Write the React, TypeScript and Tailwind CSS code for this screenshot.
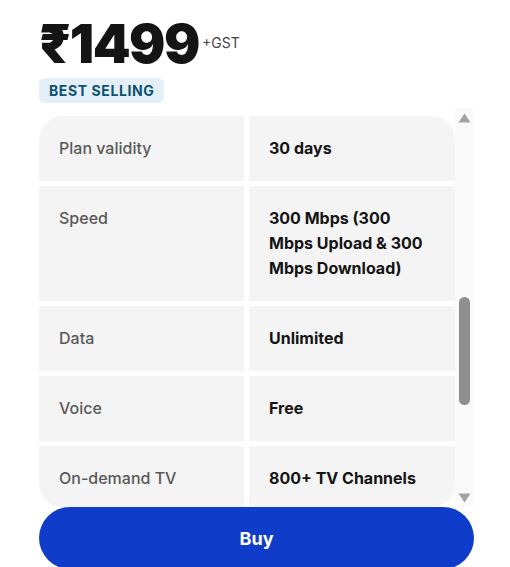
import React from "react";

type Row = { label: string; value: string };

const rows: Row[] = [
  { label: "Plan validity", value: "30 days" },
  { label: "Speed", value: "300 Mbps (300 Mbps Upload & 300 Mbps Download)" },
  { label: "Data", value: "Unlimited" },
  { label: "Voice", value: "Free" },
  { label: "On-demand TV", value: "800+ TV Channels" },
];

function Scrollbar() {
  return (
    <div className="w-[19px] h-full bg-[#fafafa] flex flex-col items-center pt-[5px] pb-[4px]">
      <svg width="13" height="10" viewBox="0 0 13 10">
        <path d="M6.5 0.5 L12.5 9.5 L0.5 9.5 Z" fill="#a3a3a3" />
      </svg>
      <div className="w-[11px] h-[108px] rounded-full bg-[#8f8f8f] mt-[174px]" />
      <div className="flex-1" />
      <svg width="13" height="10" viewBox="0 0 13 10">
        <path d="M0.5 0.5 L12.5 0.5 L6.5 9.5 Z" fill="#a3a3a3" />
      </svg>
    </div>
  );
}

export default function App() {
  return (
    <div
      className="w-[510px] h-[567px] overflow-hidden bg-white pl-[39px] pt-[14px]"
      style={{ fontFamily: "Inter, 'Noto Sans', sans-serif" }}
    >
      <div className="flex items-start">
        <span className="text-[54px] leading-[60px] font-black tracking-[-1.5px] text-[#141414]">
          ₹1499
        </span>
        <span className="ml-[3px] mt-[21px] text-[14px] leading-[16px] text-[#444]">+GST</span>
      </div>
      <div className="mt-[4px] inline-flex h-[25px] items-center rounded-md bg-[#e4eff7] px-[10px] text-[14px] font-bold tracking-[0.6px] text-[#0b5273]">
        BEST SELLING
      </div>
      <div className="mt-[5px] flex w-[435px] h-[399px]">
        <div className="flex-1 pt-2">
          <div className="grid grid-cols-[205px_206px] gap-[5px] h-[391px] rounded-[24px] overflow-hidden content-start">
            {rows.map((r) => (
              <React.Fragment key={r.label}>
                <div className="bg-[#f4f4f4] px-5 py-5 text-[16px] leading-[25px] font-medium text-[#595959]">
                  {r.label}
                </div>
                <div className="bg-[#f4f4f4] px-5 py-5 text-[16px] leading-[25px] font-bold text-[#141414]">
                  {r.value}
                </div>
              </React.Fragment>
            ))}
          </div>
        </div>
        <Scrollbar />
      </div>
      <button className="w-[435px] h-[62px] rounded-full bg-[#0f3cc9] text-white text-[18px] font-bold">
        Buy
      </button>
    </div>
  );
}
